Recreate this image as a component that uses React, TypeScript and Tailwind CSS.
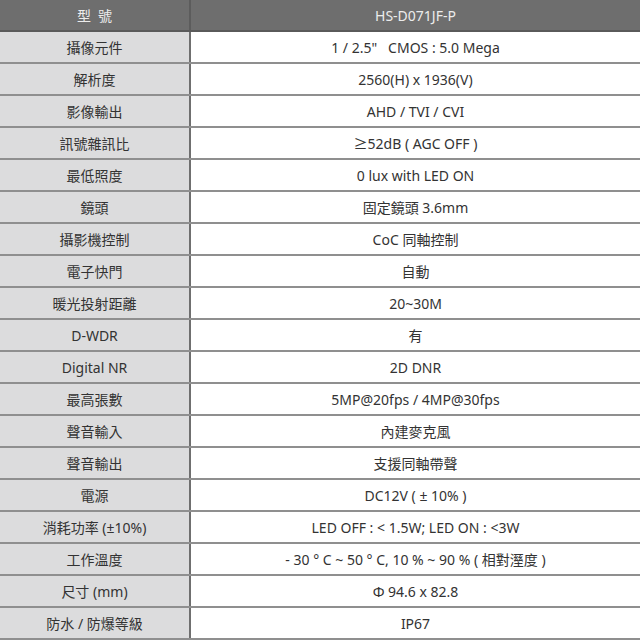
const specs: [string, string][] = [
  ['攝像元件', '1 / 2.5"   CMOS : 5.0 Mega'],
  ['解析度', '2560(H) x 1936(V)'],
  ['影像輸出', 'AHD / TVI / CVI'],
  ['訊號雜訊比', '≥52dB ( AGC OFF )'],
  ['最低照度', '0 lux with LED ON'],
  ['鏡頭', '固定鏡頭 3.6mm'],
  ['攝影機控制', 'CoC 同軸控制'],
  ['電子快門', '自動'],
  ['暖光投射距離', '20~30M'],
  ['D-WDR', '有'],
  ['Digital NR', '2D DNR'],
  ['最高張數', '5MP@20fps / 4MP@30fps'],
  ['聲音輸入', '內建麥克風'],
  ['聲音輸出', '支援同軸帶聲'],
  ['電源', 'DC12V ( ± 10% )'],
  ['消耗功率 (±10%)', 'LED OFF : < 1.5W; LED ON : <3W'],
  ['工作溫度', '- 30 ° C ~ 50 ° C, 10 % ~ 90 % ( 相對溼度 )'],
  ['尺寸 (mm)', 'Φ 94.6 x 82.8'],
  ['防水 / 防爆等級', 'IP67'],
];

export default function App() {
  return (
    <div
      className="w-[640px] h-[640px] bg-white text-[14px] text-[#333] overflow-hidden"
      style={{ fontFamily: '"Noto Sans", "Noto Sans CJK TC", sans-serif' }}
    >
      <div className="flex h-8 bg-[#6e6e6e] text-[#ececec] border-b-2 border-[#5a5a5a]">
        <div className="w-[189px] flex items-center justify-center tracking-[0.5em] pl-[0.5em]">型號</div>
        <div className="w-[2px] bg-[#5c5c5c]" />
        <div className="flex-1 flex items-center justify-center">HS-D071JF-P</div>
      </div>
      {specs.map(([label, value]) => (
        <div key={label} className="flex h-8 border-b-2 border-[#8f8f8f]">
          <div className="w-[189px] bg-[#dcdcdd] flex items-center justify-center">{label}</div>
          <div className="w-[2px] bg-[#6f6f6f]" />
          <div className="flex-1 flex items-center justify-center whitespace-pre">{value}</div>
        </div>
      ))}
    </div>
  );
}
